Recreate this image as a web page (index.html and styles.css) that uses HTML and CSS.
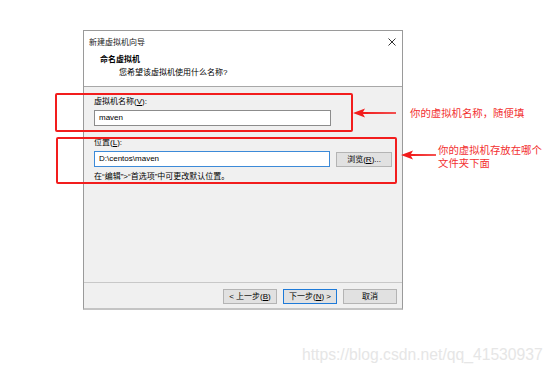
FILE: index.html
```html
<!DOCTYPE html>
<html lang="zh-CN">
<head>
    <meta charset="UTF-8">
    <title>新建虚拟机向导</title>
    <link rel="stylesheet" href="styles.css">
</head>
<body>
    <div class="stage">
        <div class="dialog">
            <div class="titlebar">
                <span>新建虚拟机向导</span>
                <svg class="close" width="8" height="8" viewBox="0 0 8 8">
                    <path d="M0.5 0.5 L7.5 7.5 M7.5 0.5 L0.5 7.5" stroke="#333" stroke-width="1"/>
                </svg>
            </div>
            <div class="header">
                <div class="heading">命名虚拟机</div>
                <div class="subtitle">您希望该虚拟机使用什么名称?</div>
            </div>
            <div class="content">
                <div class="label">虚拟机名称(<u>V</u>):</div>
                <div class="input">maven</div>

                <div class="label label-gap">位置(<u>L</u>):</div>
                <div class="row">
                    <div class="input focused">D:\centos\maven</div>
                    <div class="btn browse">浏览(<u>R</u>)...</div>
                </div>
                <div class="note">在“编辑”&gt;“首选项”中可更改默认位置。</div>
            </div>
            <div class="footer">
                <div class="btn">&lt; 上一步(<u>B</u>)</div>
                <div class="btn primary">下一步(<u>N</u>) &gt;</div>
                <div class="btn">取消</div>
            </div>
        </div>
    </div>

    <!-- 标注 -->
    <div class="mark mark-name"></div>
    <div class="mark mark-path"></div>

    <svg class="arrow arrow-name" width="44" height="10" viewBox="0 0 44 10">
        <polygon points="0,5 12,0.5 10,4 43,4.2 43,5.8 10,6 12,9.5" fill="#f21d1d"/>
    </svg>
    <svg class="arrow arrow-path" width="36" height="10" viewBox="0 0 36 10">
        <polygon points="0,5 12,0.5 10,4 35,4.2 35,5.8 10,6 12,9.5" fill="#f21d1d"/>
    </svg>

    <div class="note-text note-name">你的虚拟机名称，随便填</div>
    <div class="note-text note-path">你的虚拟机存放在哪个<br>文件夹下面</div>

    <div class="watermark">https://blog.csdn.net/qq_41530937</div>
</body>
</html>
```

FILE: styles.css
```css
body {
    margin: 0;
    width: 554px;
    height: 372px;
    background: #fff;
    position: relative;
    overflow: hidden;
    font-family: "Liberation Sans", "Noto Sans CJK SC", sans-serif;
    color: #000;
}

.stage {
    padding: 30px 0 0 83px;
}

/* 对话框 */
.dialog {
    width: 320px;
    height: 280px;
    box-sizing: border-box;
    border: 1px solid #9a9a9a;
    border-bottom: 2px solid #c4c4c4;
    background: #f0f0f0;
    display: flex;
    flex-direction: column;
    font-size: 8px;
}

.titlebar {
    height: 21px;
    background: #fff;
    display: flex;
    align-items: center;
    justify-content: space-between;
    padding: 0 6px 0 5px;
    color: #222;
}

.header {
    height: 35px;
    background: #fff;
    border-bottom: 1px solid #a8a8a8;
    box-sizing: border-box;
}

.heading {
    font-weight: bold;
    padding: 3px 0 0 16px;
    line-height: 10px;
}

.subtitle {
    padding: 3px 0 0 35px;
    line-height: 10px;
}

.content {
    flex: 1;
    padding: 10px 10px 0 10px;
}

.label {
    line-height: 10px;
    margin-bottom: 3px;
}

.label-gap {
    margin-top: 12px;
}

.input {
    width: 237px;
    height: 16px;
    box-sizing: border-box;
    border: 1px solid #8c8c8c;
    background: #fff;
    padding: 0 4px;
    line-height: 14px;
}

.input.focused {
    border-color: #3c8ad8;
}

.row {
    display: flex;
    align-items: center;
    gap: 6px;
}

.note {
    margin-top: 5px;
    line-height: 10px;
}

.footer {
    height: 26px;
    border-top: 1px solid #c8c8c8;
    display: flex;
    justify-content: flex-end;
    gap: 6px;
    padding: 6px 5px 0 0;
    box-sizing: border-box;
}

.btn {
    width: 54px;
    height: 15px;
    box-sizing: border-box;
    border: 1px solid #b4b4b4;
    background: #e1e1e1;
    display: flex;
    align-items: center;
    justify-content: center;
    line-height: 13px;
}

.btn.primary {
    border-color: #1e7ad8;
}

.btn.browse {
    width: 56px;
}

/* 红色标注 */
.mark {
    position: absolute;
    border: 2px solid #f21d1d;
    border-radius: 2px;
    box-sizing: border-box;
}

.mark-name {
    left: 55px;
    top: 93px;
    width: 298px;
    height: 39px;
}

.mark-path {
    left: 56px;
    top: 137px;
    width: 341px;
    height: 47px;
}

.arrow {
    position: absolute;
}

.arrow-name {
    left: 353px;
    top: 108px;
}

.arrow-path {
    left: 401px;
    top: 150px;
}

.note-text {
    position: absolute;
    color: #f23030;
    font-size: 10.4px;
    line-height: 13px;
}

.note-name {
    left: 410px;
    top: 107px;
}

.note-path {
    left: 438px;
    top: 144px;
}

.watermark {
    position: absolute;
    left: 302px;
    top: 345px;
    font-size: 15.7px;
    line-height: 20px;
    color: #e6e6e6;
}
```
